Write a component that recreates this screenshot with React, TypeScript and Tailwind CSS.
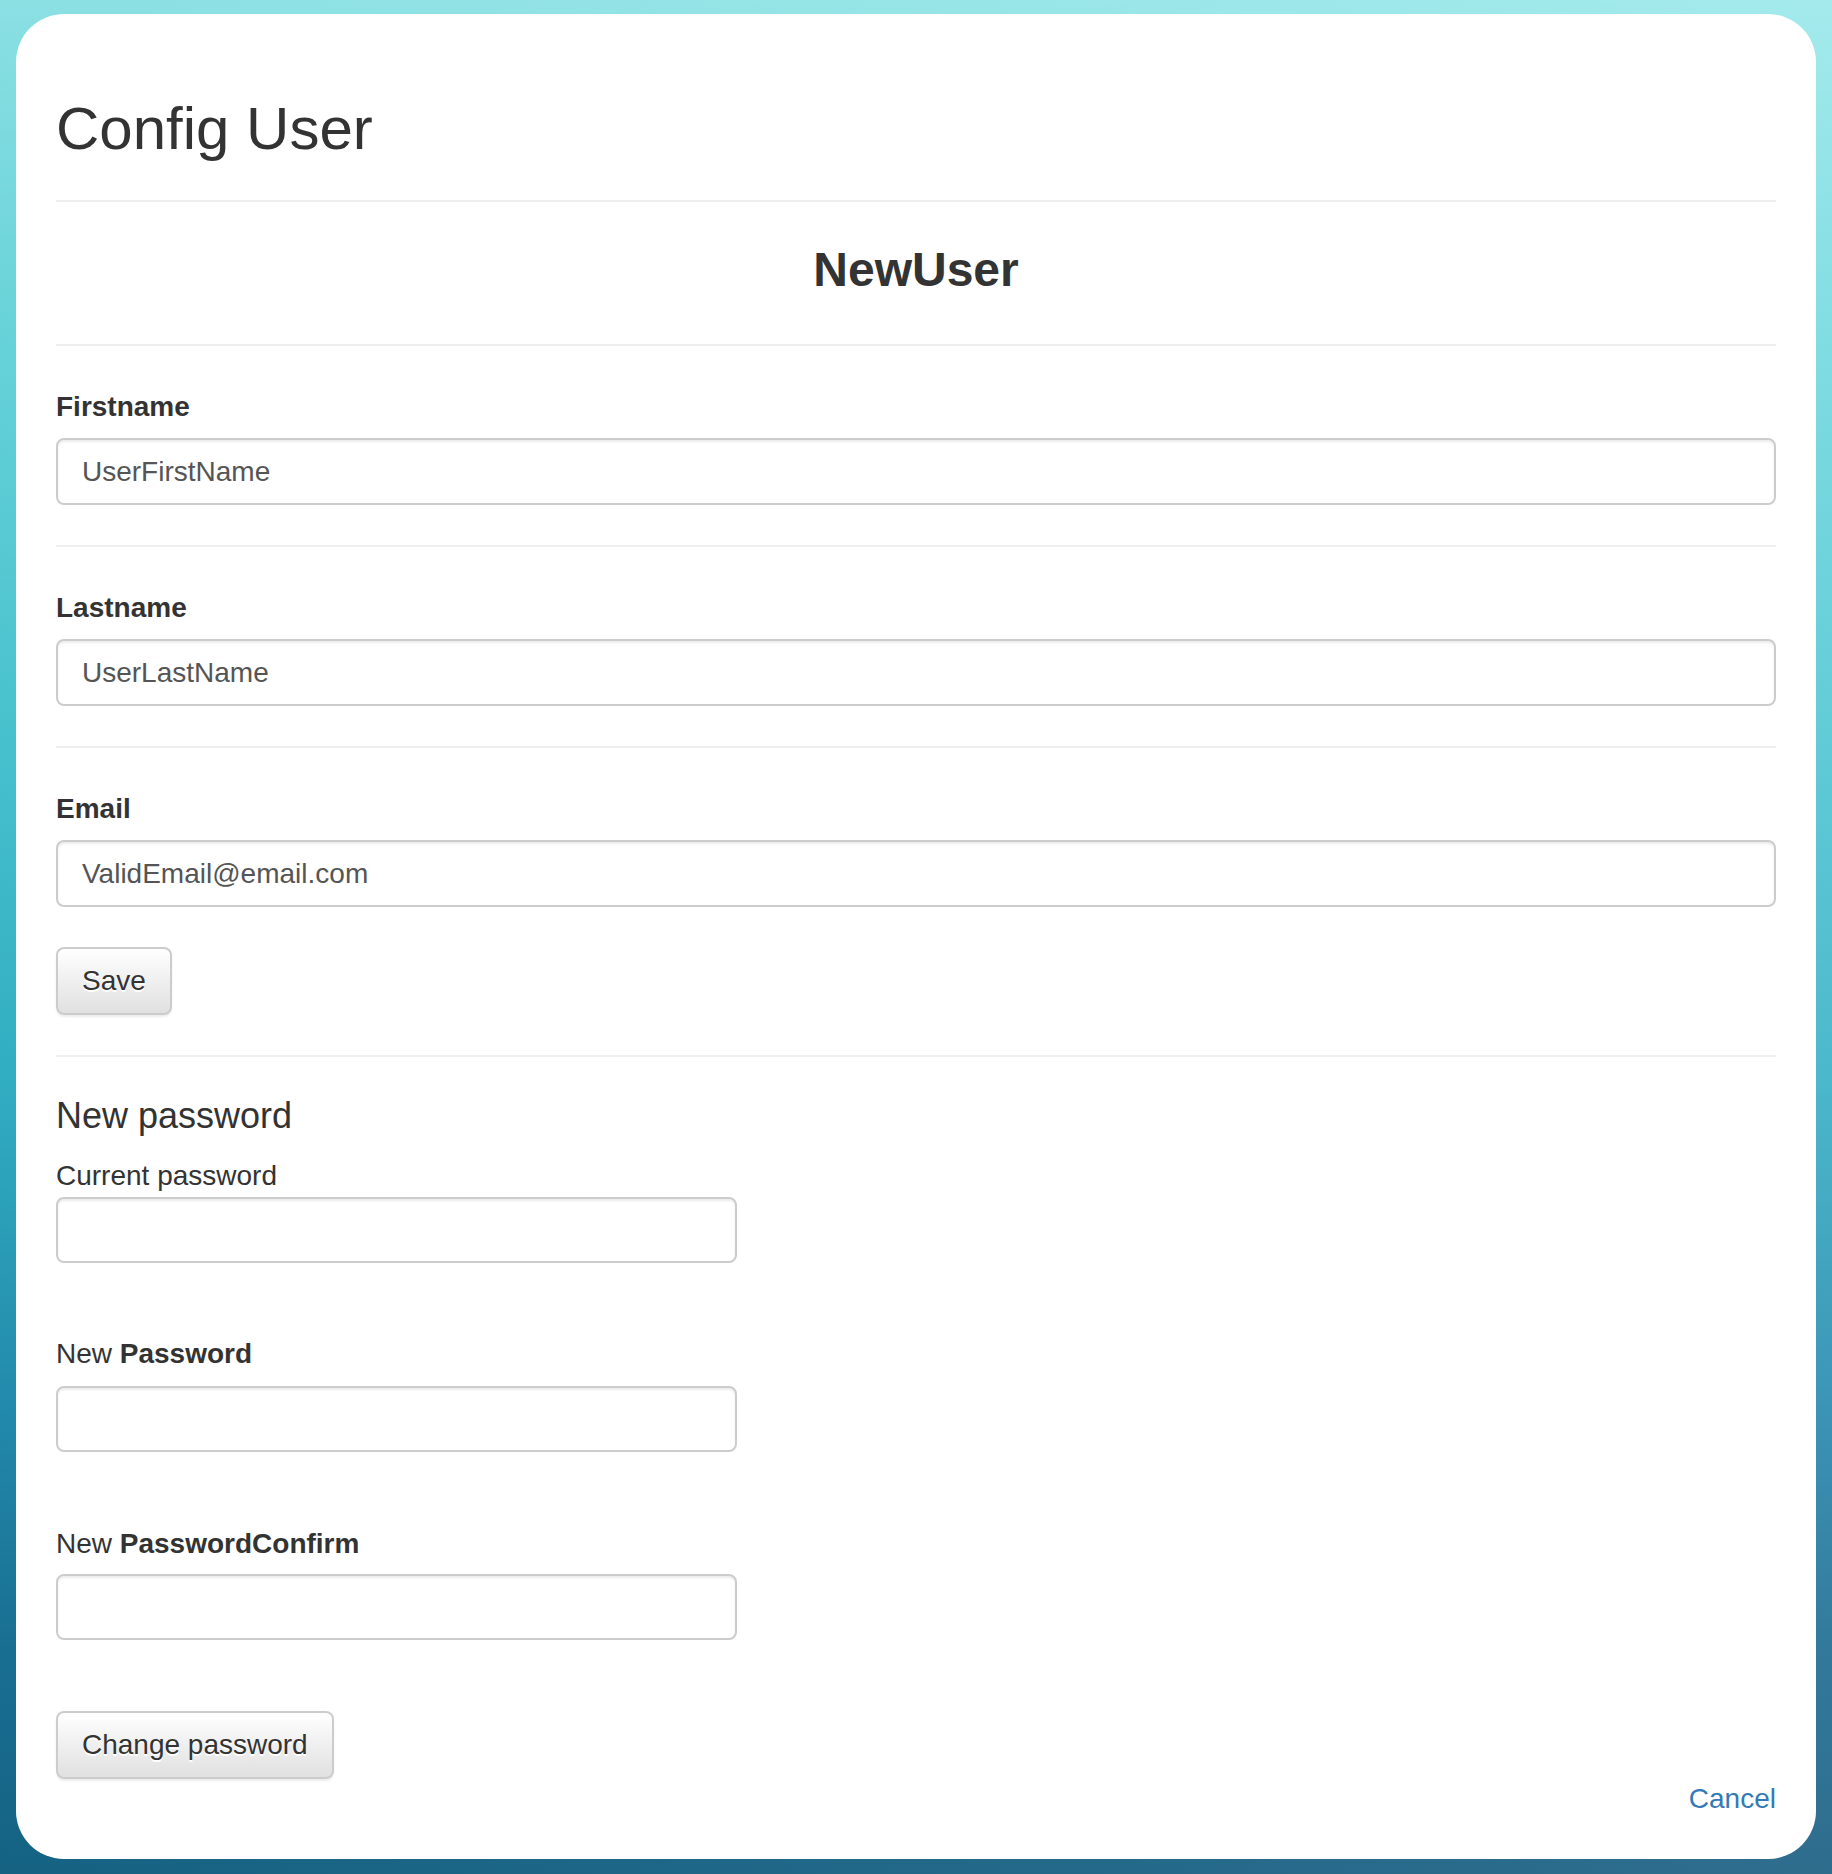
const inputBase =
  "block rounded-[8px] border-2 border-[#ccc] bg-white px-[24px] text-[28px] leading-[40px] text-[#555] shadow-[inset_0_2px_2px_rgba(0,0,0,0.075)] outline-none";

const btnBase =
  "inline-block rounded-[8px] border-2 border-[#ccc] bg-[linear-gradient(180deg,#ffffff_0%,#e0e0e0_100%)] px-[24px] py-[12px] text-[28px] leading-[40px] text-[#333] shadow-[inset_0_2px_0_rgba(255,255,255,0.15),0_2px_2px_rgba(0,0,0,0.075)] [text-shadow:0_2px_0_#fff]";

function Field({ label, value }: { label: string; value: string }) {
  return (
    <div>
      <label className="mt-[41px] mb-[11px] block font-bold">{label}</label>
      <input className={inputBase + " h-[67px] w-full"} defaultValue={value} />
    </div>
  );
}

export default function App() {
  return (
    <div className="min-h-screen bg-[linear-gradient(90deg,rgba(0,150,160,0.10),rgba(255,255,255,0.10)),linear-gradient(180deg,#9ae8ea_0%,#72d9df_18%,#4ec5d2_40%,#36afc5_58%,#2586ab_76%,#1b6a90_88%,#175c80_100%)] px-4 pt-[14px] pb-4 font-['Liberation_Sans',Arial,sans-serif]">
      <div className="rounded-[48px] bg-white px-10 pb-10 text-[28px] leading-[40px] text-[#333]">
        <div className="border-b-2 border-[#eee] pt-[82px] pb-[38px]">
          <h1 className="text-[60px] leading-[66px]">Config User</h1>
        </div>

        <h2 className="mt-[41px] mb-[48px] text-center text-[48px] leading-[53px] font-bold">
          NewUser
        </h2>
        <div className="border-t-2 border-[#eee]" />

        <Field label="Firstname" value="UserFirstName" />
        <div className="mt-[40px] border-t-2 border-[#eee]" />
        <Field label="Lastname" value="UserLastName" />
        <div className="mt-[40px] border-t-2 border-[#eee]" />
        <Field label="Email" value="ValidEmail@email.com" />

        <div className="mt-[40px]">
          <button className={btnBase}>Save</button>
        </div>
        <div className="mt-[40px] border-t-2 border-[#eee]" />

        <h3 className="mt-[39px] text-[36px] leading-[40px]">New password</h3>
        <label className="mt-[20px] block">Current password</label>
        <input type="password" className={inputBase + " mt-[1px] h-[66px] w-[681px]"} />

        <label className="mt-[71px] block">
          New <b className="font-bold">Password</b>
        </label>
        <input type="password" className={inputBase + " mt-[12px] h-[66px] w-[681px]"} />

        <label className="mt-[72px] block">
          New <b className="font-bold">PasswordConfirm</b>
        </label>
        <input type="password" className={inputBase + " mt-[10px] h-[66px] w-[681px]"} />

        <div className="mt-[71px]">
          <button className={btnBase}>Change password</button>
        </div>
        <div className="text-right">
          <a href="#" className="text-[#337ab7]">
            Cancel
          </a>
        </div>
      </div>
    </div>
  );
}
